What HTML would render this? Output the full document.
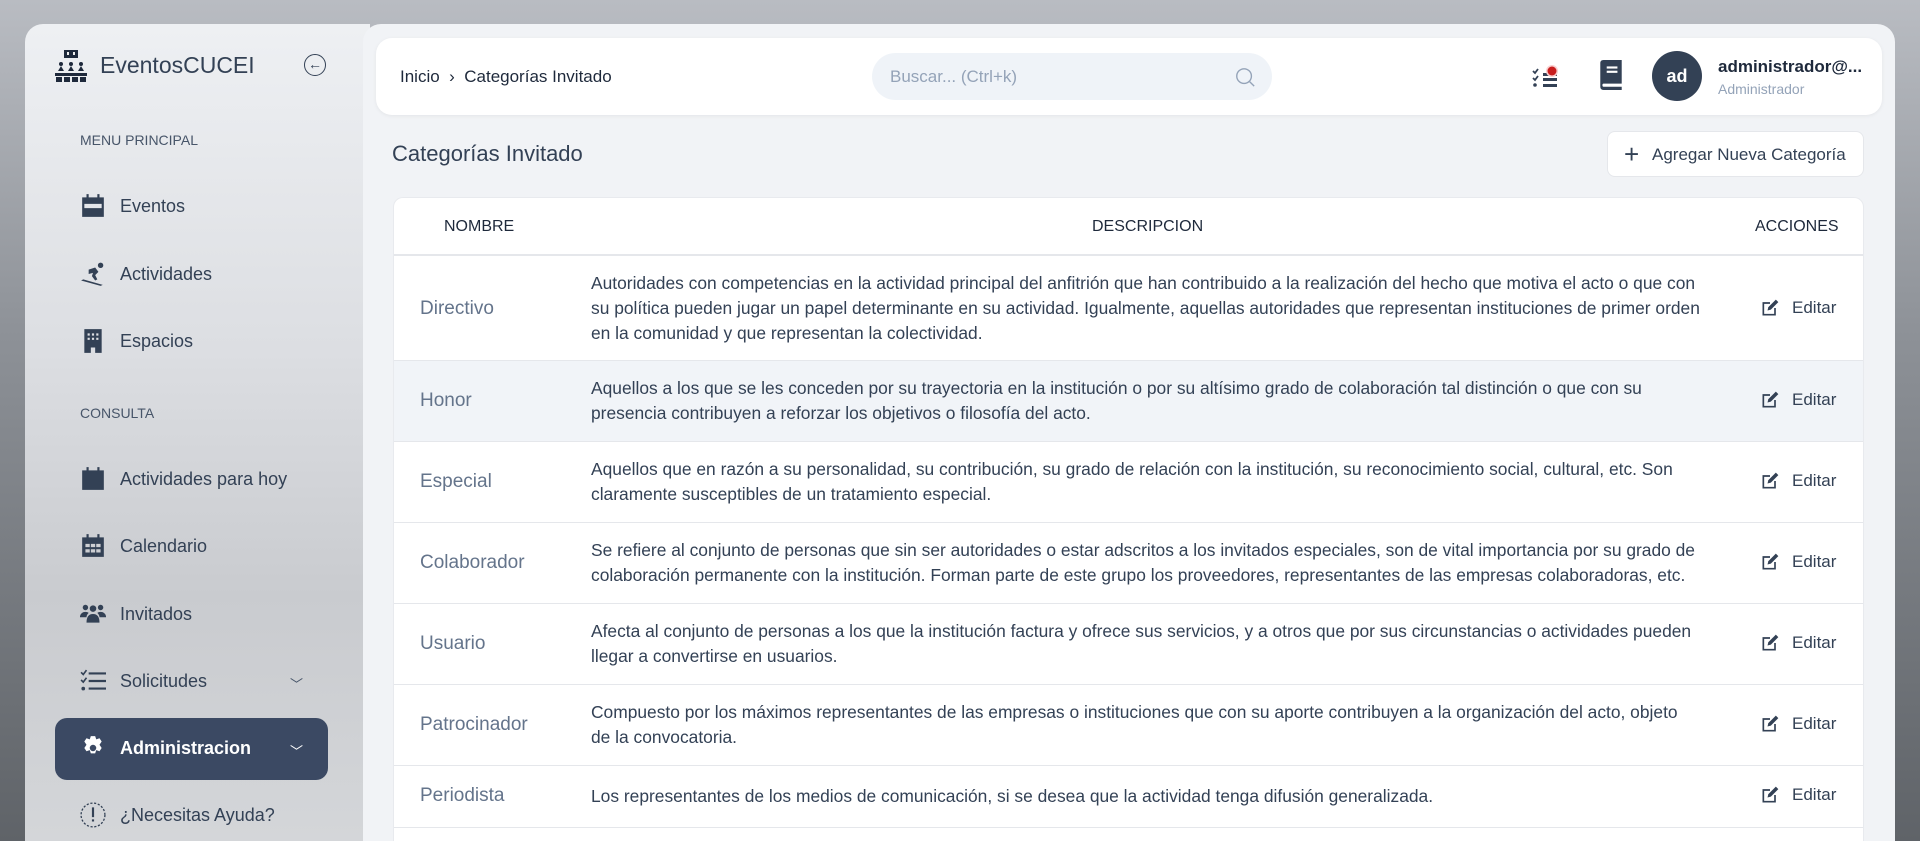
<!DOCTYPE html>
<html style="overflow:hidden;width:1920px;height:841px"><head><meta charset="utf-8"><style>
*{box-sizing:border-box;margin:0;padding:0}
body{width:1920px;height:841px;overflow:hidden;font-family:"Liberation Sans",sans-serif;color:#334155;
background:linear-gradient(180deg,#b9bcc2 0%,#8d9197 40%,#5f6368 100%);position:relative}
.side{position:absolute;left:25px;top:24px;width:345px;height:817px;border-radius:18px 0 0 0;
background:linear-gradient(180deg,#eef0f3 0%,#dcdee2 40%,#c9cbcf 70%,#d4d6d9 100%)}
.main{position:absolute;left:363px;top:24px;width:1532px;height:817px;background:#f1f3f6;border-radius:18px 18px 0 0}
.logo{position:absolute;left:55px;top:50px}
.brand{position:absolute;left:100px;top:52px;font-size:23px;color:#334155}
.back{position:absolute;left:304px;top:54px;width:22px;height:22px;border:1.5px solid #334155;border-radius:50%;font-size:14px;text-align:center;line-height:19px}
.sec{position:absolute;left:80px;font-size:14px;color:#475569}
.item{position:absolute;left:80px;font-size:18px;color:#334155;display:flex;align-items:center}
.item svg{width:26px;height:26px;margin-right:14px;fill:#334155}
.chev{position:absolute;left:290px;font-size:13px;color:#475569}
.admin{position:absolute;left:55px;top:718px;width:273px;height:62px;background:#3b4963;border-radius:12px}
.header{position:absolute;left:376px;top:38px;width:1506px;height:77px;background:#fff;border-radius:16px;box-shadow:0 1px 4px rgba(0,0,0,.06)}
.crumb{position:absolute;left:24px;top:29px;font-size:17px;color:#1e293b}
.search{position:absolute;left:496px;top:15px;width:400px;height:47px;border-radius:24px;background:#eff3f8;color:#94a3b8;font-size:17px;padding:14px 18px}
.avatar{position:absolute;left:1276px;top:13px;width:50px;height:50px;border-radius:50%;background:#334155;color:#fff;font-weight:bold;font-size:18px;text-align:center;line-height:50px}
.title{position:absolute;left:392px;top:141px;font-size:22px;color:#334155}
.btn{position:absolute;left:1607px;top:131px;width:257px;height:46px;background:#fff;border-radius:8px;border:1px solid #e5e7eb;font-size:17px;color:#334155;padding:13px 0 0 44px}
.btn span{position:absolute;left:16px;top:7px;font-size:26px;font-weight:300}
.card{position:absolute;left:393px;top:197px;width:1471px;height:644px;background:#fff;border-radius:10px 10px 0 0;border:1px solid #e8eaee;border-bottom:0;overflow:hidden}
.th{position:absolute;top:20px;font-size:16px;color:#1e293b}
.row{position:absolute;left:0;width:100%;border-top:1px solid #e5e7eb}
.nm{position:absolute;left:26px;font-size:19px;color:#64748b;font-weight:300}
.ds{position:absolute;left:197px;font-size:17.4px;line-height:25px;color:#334155;white-space:nowrap}
.ed{position:absolute;left:1366px;font-size:17px;color:#334155;display:flex;align-items:center}
.ed svg{width:20px;height:20px;margin-right:12px}
</style></head><body>
<div class="side"></div>
<div class="main"></div>
<svg class="logo" width="32" height="32" viewBox="0 0 32 32" fill="#1e293b"><rect x="9" y="0" width="14" height="8"/><rect x="12" y="2" width="2" height="3" fill="#eee"/><rect x="18" y="2" width="2" height="3" fill="#eee"/><circle cx="6" cy="14" r="2"/><circle cx="16" cy="14" r="2"/><circle cx="26" cy="14" r="2"/><path d="M3 21l3-5 3 5zM13 21l3-5 3 5zM23 21l3-5 3 5z"/><rect x="0" y="23" width="32" height="3"/><rect x="1" y="27" width="6" height="5"/><rect x="9" y="27" width="6" height="5"/><rect x="17" y="27" width="6" height="5"/><rect x="25" y="27" width="6" height="5"/></svg>
<div class="brand">EventosCUCEI</div>
<div class="back">←</div>
<div class="sec" style="top:132px">MENU PRINCIPAL</div>
<div class="item" style="top:193px"><svg viewBox="0 0 24 24"><path d="M6 1h2v3H6zM16 1h2v3h-2zM2 4h20v18H2zM4 10v4h16v-4z"/></svg>Eventos</div>
<div class="item" style="top:261px"><svg viewBox="0 0 24 24"><circle cx="19" cy="4" r="2.5"/><path d="M8 8l6-2 3 4-3 3 2 4-2 1-3-4 1-3-4 1zM1 18l2-1 18 5-2 1z"/></svg>Actividades</div>
<div class="item" style="top:328px"><svg viewBox="0 0 24 24"><path d="M4 1h16v22h-6v-5h-4v5H4zM7 5v2h2V5zm4 0v2h2V5zm4 0v2h2V5zM7 9v2h2V9zm4 0v2h2V9zm4 0v2h2V9z"/></svg>Espacios</div>
<div class="sec" style="top:405px">CONSULTA</div>
<div class="item" style="top:466px"><svg viewBox="0 0 24 24"><path d="M6 1h2v3H6zM16 1h2v3h-2zM2 4h20v18H2z"/></svg>Actividades para hoy</div>
<div class="item" style="top:533px"><svg viewBox="0 0 24 24"><path d="M6 1h2v3H6zM16 1h2v3h-2zM2 4h20v18H2zM5 10v3h4v-3zm5 0v3h4v-3zm5 0v3h4v-3zM5 15v3h4v-3zm5 0v3h4v-3zm5 0v3h4v-3z"/></svg>Calendario</div>
<div class="item" style="top:601px"><svg viewBox="0 0 24 24"><circle cx="5" cy="6" r="2.5"/><circle cx="19" cy="6" r="2.5"/><circle cx="12" cy="7" r="3"/><path d="M0 14q1-4 5-4 2 0 3 1-2 2-2 4H0zM24 14q-1-4-5-4-2 0-3 1 2 2 2 4h6zM6 20q0-8 6-8t6 8z"/></svg>Invitados</div>
<div class="item" style="top:668px"><svg viewBox="0 0 24 24"><path d="M8 4h16v2H8zM8 11h16v2H8zM8 18h16v2H8z"/><path d="M1 4l2 2 3-4M1 11l2 2 3-4" stroke="#334155" stroke-width="1.5" fill="none"/><circle cx="3" cy="19" r="1.7"/></svg>Solicitudes</div>
<div class="chev" style="top:674px">﹀</div>
<div class="admin"></div>
<div class="item" style="top:735px;color:#fff;font-weight:bold"><svg viewBox="0 0 24 24" style="fill:#fff"><path d="M10 1h4l1 3 3-1 2 3-2 3 2 3-2 3-3-1-1 3h-4l-1-3-3 1-2-3 2-3-2-3 2-3 3 1zM12 9a3 3 0 100 6 3 3 0 000-6z"/></svg>Administracion</div>
<div class="chev" style="top:741px;color:#fff">﹀</div>
<div class="item" style="top:802px"><svg viewBox="0 0 24 24"><circle cx="12" cy="12" r="11" fill="none" stroke="#334155" stroke-width="1.2" stroke-dasharray="2 1.5"/><path d="M11 5h2v9h-2zM11 16h2v2h-2z"/></svg>¿Necesitas Ayuda?</div>

<div class="header">
<div class="crumb">Inicio &nbsp;›&nbsp; Categorías Invitado</div>
<div class="search">Buscar... (Ctrl+k)<svg style="position:absolute;right:16px;top:13px" width="22" height="22" viewBox="0 0 24 24" fill="none" stroke="#94a3b8" stroke-width="1.5"><circle cx="11" cy="11" r="8"/><path d="M17 17l5 5"/></svg></div>
<svg style="position:absolute;left:1156px;top:23px" width="30" height="30" viewBox="0 0 30 30"><path d="M1 10l2 2 3-4M1 17l2 2 3-4" stroke="#334155" stroke-width="1.8" fill="none"/><circle cx="3" cy="24" r="1.8" fill="#334155"/><rect x="11" y="12" width="14" height="3" fill="#334155"/><rect x="11" y="17" width="14" height="3" fill="#334155"/><rect x="11" y="23" width="14" height="3" fill="#334155"/><circle cx="20" cy="10" r="6" fill="#f9d0d0"/><circle cx="20" cy="10" r="4.5" fill="#c81e1e"/></svg>
<svg style="position:absolute;left:1222px;top:22px" width="26" height="30" viewBox="0 0 24 28"><path d="M2 3q0-3 3-3h17v22H5q-1 0-1 1.5T5 25h17v3H5q-3 0-3-3z" fill="#334155"/><rect x="8" y="6" width="10" height="2" fill="#fff"/><rect x="8" y="10" width="10" height="2" fill="#fff"/></svg>
<div class="avatar">ad</div>
<div style="position:absolute;left:1342px;top:19px;font-size:17px;font-weight:bold;color:#1e293b">administrador@...</div>
<div style="position:absolute;left:1342px;top:43px;font-size:14px;color:#94a3b8">Administrador</div>
</div>

<div class="title">Categorías Invitado</div>
<div class="btn"><span>+</span>Agregar Nueva Categoría</div>

<div class="card">
<div class="th" style="left:50px">NOMBRE</div>
<div class="th" style="left:698px">DESCRIPCION</div>
<div class="th" style="left:1361px">ACCIONES</div>
<div class="row" style="top:56px;height:106px;border-top:2px solid #e5e7eb"><div class="nm" style="top:42px">Directivo</div><div class="ds" style="top:15px">Autoridades con competencias en la actividad principal del anfitrión que han contribuido a la realización del hecho que motiva el acto o que con<br>su política pueden jugar un papel determinante en su actividad. Igualmente, aquellas autoridades que representan instituciones de primer orden<br>en la comunidad y que representan la colectividad.</div><div class="ed" style="top:42px"><svg viewBox="0 0 24 24" fill="#334155"><path d="M3 5h9v2H5v12h12v-7h2v9H3z"/><path d="M9 15l1-4 9-9 3 3-9 9z"/></svg>Editar</div></div>
<div class="row" style="top:162px;height:81px;background:#f1f4f8"><div class="nm" style="top:29px">Honor</div><div class="ds" style="top:15px">Aquellos a los que se les conceden por su trayectoria en la institución o por su altísimo grado de colaboración tal distinción o que con su<br>presencia contribuyen a reforzar los objetivos o filosofía del acto.</div><div class="ed" style="top:29px"><svg viewBox="0 0 24 24" fill="#334155"><path d="M3 5h9v2H5v12h12v-7h2v9H3z"/><path d="M9 15l1-4 9-9 3 3-9 9z"/></svg>Editar</div></div>
<div class="row" style="top:243px;height:81px"><div class="nm" style="top:29px">Especial</div><div class="ds" style="top:15px">Aquellos que en razón a su personalidad, su contribución, su grado de relación con la institución, su reconocimiento social, cultural, etc. Son<br>claramente susceptibles de un tratamiento especial.</div><div class="ed" style="top:29px"><svg viewBox="0 0 24 24" fill="#334155"><path d="M3 5h9v2H5v12h12v-7h2v9H3z"/><path d="M9 15l1-4 9-9 3 3-9 9z"/></svg>Editar</div></div>
<div class="row" style="top:324px;height:81px"><div class="nm" style="top:29px">Colaborador</div><div class="ds" style="top:15px">Se refiere al conjunto de personas que sin ser autoridades o estar adscritos a los invitados especiales, son de vital importancia por su grado de<br>colaboración permanente con la institución. Forman parte de este grupo los proveedores, representantes de las empresas colaboradoras, etc.</div><div class="ed" style="top:29px"><svg viewBox="0 0 24 24" fill="#334155"><path d="M3 5h9v2H5v12h12v-7h2v9H3z"/><path d="M9 15l1-4 9-9 3 3-9 9z"/></svg>Editar</div></div>
<div class="row" style="top:405px;height:81px"><div class="nm" style="top:29px">Usuario</div><div class="ds" style="top:15px">Afecta al conjunto de personas a los que la institución factura y ofrece sus servicios, y a otros que por sus circunstancias o actividades pueden<br>llegar a convertirse en usuarios.</div><div class="ed" style="top:29px"><svg viewBox="0 0 24 24" fill="#334155"><path d="M3 5h9v2H5v12h12v-7h2v9H3z"/><path d="M9 15l1-4 9-9 3 3-9 9z"/></svg>Editar</div></div>
<div class="row" style="top:486px;height:81px"><div class="nm" style="top:29px">Patrocinador</div><div class="ds" style="top:15px">Compuesto por los máximos representantes de las empresas o instituciones que con su aporte contribuyen a la organización del acto, objeto<br>de la convocatoria.</div><div class="ed" style="top:29px"><svg viewBox="0 0 24 24" fill="#334155"><path d="M3 5h9v2H5v12h12v-7h2v9H3z"/><path d="M9 15l1-4 9-9 3 3-9 9z"/></svg>Editar</div></div>
<div class="row" style="top:567px;height:62px"><div class="nm" style="top:19px">Periodista</div><div class="ds" style="top:18px">Los representantes de los medios de comunicación, si se desea que la actividad tenga difusión generalizada.</div><div class="ed" style="top:19px"><svg viewBox="0 0 24 24" fill="#334155"><path d="M3 5h9v2H5v12h12v-7h2v9H3z"/><path d="M9 15l1-4 9-9 3 3-9 9z"/></svg>Editar</div></div>
<div class="row" style="top:629px;height:14px"></div>
</div>
</body></html>
